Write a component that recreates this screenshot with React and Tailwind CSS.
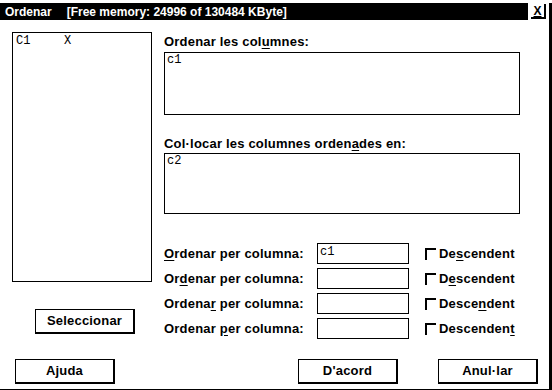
const sans = "font-['Liberation_Sans',Arial,sans-serif]";
const mono = "font-['Liberation_Mono','Courier_New',monospace]";

function Btn({ children, className = "" }) {
  return (
    <button
      type="button"
      className={`h-[25px] w-[100px] border-l border-t border-r-2 border-b-2 border-black bg-white text-[13px] font-bold tracking-[0.2px] text-black ${className}`}
    >
      {children}
    </button>
  );
}

function U({ children }) {
  return <span className="underline underline-offset-2">{children}</span>;
}

const rows = [
  { label: [<U key="u">O</U>, "rdenar per columna:"], value: "c1", check: ["De", <U key="u">s</U>, "cendent"] },
  { label: ["Or", <U key="u">d</U>, "enar per columna:"], value: "", check: ["D", <U key="u">e</U>, "scendent"] },
  { label: ["Ordena", <U key="u">r</U>, " per columna:"], value: "", check: ["Desce", <U key="u">n</U>, "dent"] },
  { label: ["Ordenar ", <U key="u">p</U>, "er columna:"], value: "", check: ["Descenden", <U key="u">t</U>] },
];

export default function App() {
  return (
    <div className={`h-[390px] w-[552px] overflow-hidden bg-white text-black ${sans}`}>
      <div className="h-[389px] w-[552px] border-b-[3px] border-r-[3px] border-black">
        {/* title bar */}
        <div className="mt-[3px] flex h-[17px] items-center">
          <div className="flex h-full w-[528px] items-center bg-black pl-[5px] text-[12px] font-bold text-white">
            <span>Ordenar</span>
            <span className="ml-[15px]">[Free memory: 24996 of 130484 KByte]</span>
          </div>
          <div className="ml-[3px] flex h-[15px] w-[15px] items-center justify-center border-b-2 border-r-2 border-black text-[12px] font-bold leading-none">
            <span className="underline underline-offset-1">X</span>
          </div>
        </div>

        <div className="flex pl-[12px] pt-[12px]">
          {/* left column */}
          <div className="flex w-[140px] flex-col">
            <div className={`h-[250px] border border-black px-[3px] pt-[1px] text-[12px] leading-[14px] ${mono}`}>
              <div className="flex">
                <span className="w-[48px]">C1</span>
                <span>X</span>
              </div>
            </div>
            <Btn className="ml-[23px] mt-[27px]">Seleccionar</Btn>
          </div>

          {/* right column */}
          <div className="ml-[12px] flex w-[356px] flex-col">
            <div className="pt-[2px] text-[13px] font-bold leading-[16px] tracking-[0.2px]">
              Ordenar les col<U>u</U>mnes:
            </div>
            <div className={`mt-[2px] h-[63px] border border-black px-[2px] text-[12px] leading-[14px] ${mono}`}>c1</div>

            <div className="mt-[21px] text-[13px] font-bold leading-[16px] tracking-[0.2px]">
              Col·locar les columnes orden<U>a</U>des en:
            </div>
            <div className={`mt-[1px] h-[61px] border border-black px-[2px] text-[12px] leading-[14px] ${mono}`}>c2</div>

            <div className="mt-[29px] flex flex-col gap-[4px]">
              {rows.map((r, i) => (
                <div key={i} className="flex h-[21px] items-center">
                  <div className="w-[153px] text-[13px] font-bold tracking-[0.2px]">{r.label}</div>
                  <div className={`h-[21px] w-[92px] border border-black px-[2px] text-[12px] leading-[16px] ${mono}`}>{r.value}</div>
                  <div className="ml-[16px] flex items-center">
                    <span className="h-[12px] w-[11px] border-l-2 border-t-2 border-black" />
                    <span className="ml-[3px] text-[13px] font-bold tracking-[0.2px]">{r.check}</span>
                  </div>
                </div>
              ))}
            </div>
          </div>
        </div>

        {/* bottom buttons */}
        <div className="mt-[20px] flex pl-[15px]">
          <Btn>Ajuda</Btn>
          <Btn className="ml-[183px]">D'acord</Btn>
          <Btn className="ml-[40px]">Anul·lar</Btn>
        </div>
      </div>
    </div>
  );
}
